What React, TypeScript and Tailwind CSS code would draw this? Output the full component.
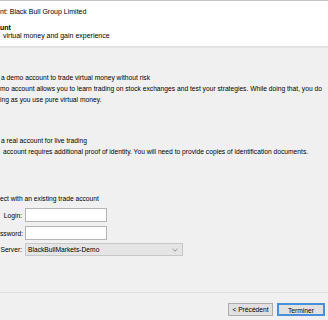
function App() {
  return (
    <div className="w-[328px] h-[320px] overflow-hidden bg-[#f0f0f0] text-black font-['Liberation_Sans',Arial,sans-serif] text-[6.7px] flex flex-col">

      {/* header */}
      <div className="h-[48px] shrink-0 bg-white border-t border-[#c4c4c4] border-b-2 border-b-[#e3e3e3] pt-[7px] leading-[8px] whitespace-nowrap text-[7px]">
        <div>nt: Black Bull Group Limited</div>
        <div className="mt-[8px] font-bold">unt</div>
        <div className="pl-[3px]">virtual money and gain experience</div>
      </div>

      {/* body */}
      <div className="flex-1 leading-[11px] whitespace-nowrap">
        <div className="mt-[24px] pl-px">a demo account to trade virtual money without risk</div>
        <div>mo account allows you to learn trading on stock exchanges and test your strategies. While doing that, you do</div>
        <div>ing as you use pure virtual money.</div>

        <div className="mt-[30px] pl-px">a real account for live trading</div>
        <div className="pl-[3px]">account requires additional proof of identity. You will need to provide copies of identification documents.</div>

        <div className="mt-[36px]">ect with an existing trade account</div>

        <div className="mt-[4px] flex items-center gap-[3px]">
          <div className="w-[22px] text-right">Login:</div>
          <div className="w-[82px] h-[14px] bg-white border border-[#b4b4b4]" />
        </div>
        <div className="mt-[4px] flex items-center gap-[3px]">
          <div className="w-[22px] text-right">ssword:</div>
          <div className="w-[82px] h-[14px] bg-white border border-[#b4b4b4]" />
        </div>
        <div className="mt-[3px] flex items-center gap-[3px]">
          <div className="w-[22px] text-right">Server:</div>
          <div className="w-[158px] h-[13px] bg-[#e5e5e5] border border-[#c8c8c8] flex items-center justify-between pl-[2px] pr-[4px]">
            <span>BlackBullMarkets-Demo</span>
            <svg width="6" height="4" viewBox="0 0 6 4" fill="none" stroke="#7a7a7a" strokeWidth="0.8">
              <path d="M0.5 0.8 L3 3.2 L5.5 0.8" />
            </svg>
          </div>
        </div>
      </div>

      {/* footer */}
      <div className="h-[28px] shrink-0 border-t border-[#dfdfdf] pt-[10px] pr-[3px] flex justify-end gap-[4px] leading-[11px]">
        <button className="w-[45px] h-[13px] bg-[#e1e1e1] border border-[#adadad] text-[6.7px]">
          &lt; Précédent
        </button>
        <button className="w-[48px] h-[13px] bg-[#e1e1e1] border-2 border-[#4a90d9] text-[6.7px]">
          Terminer
        </button>
      </div>

    </div>
  );
}

export default App;
